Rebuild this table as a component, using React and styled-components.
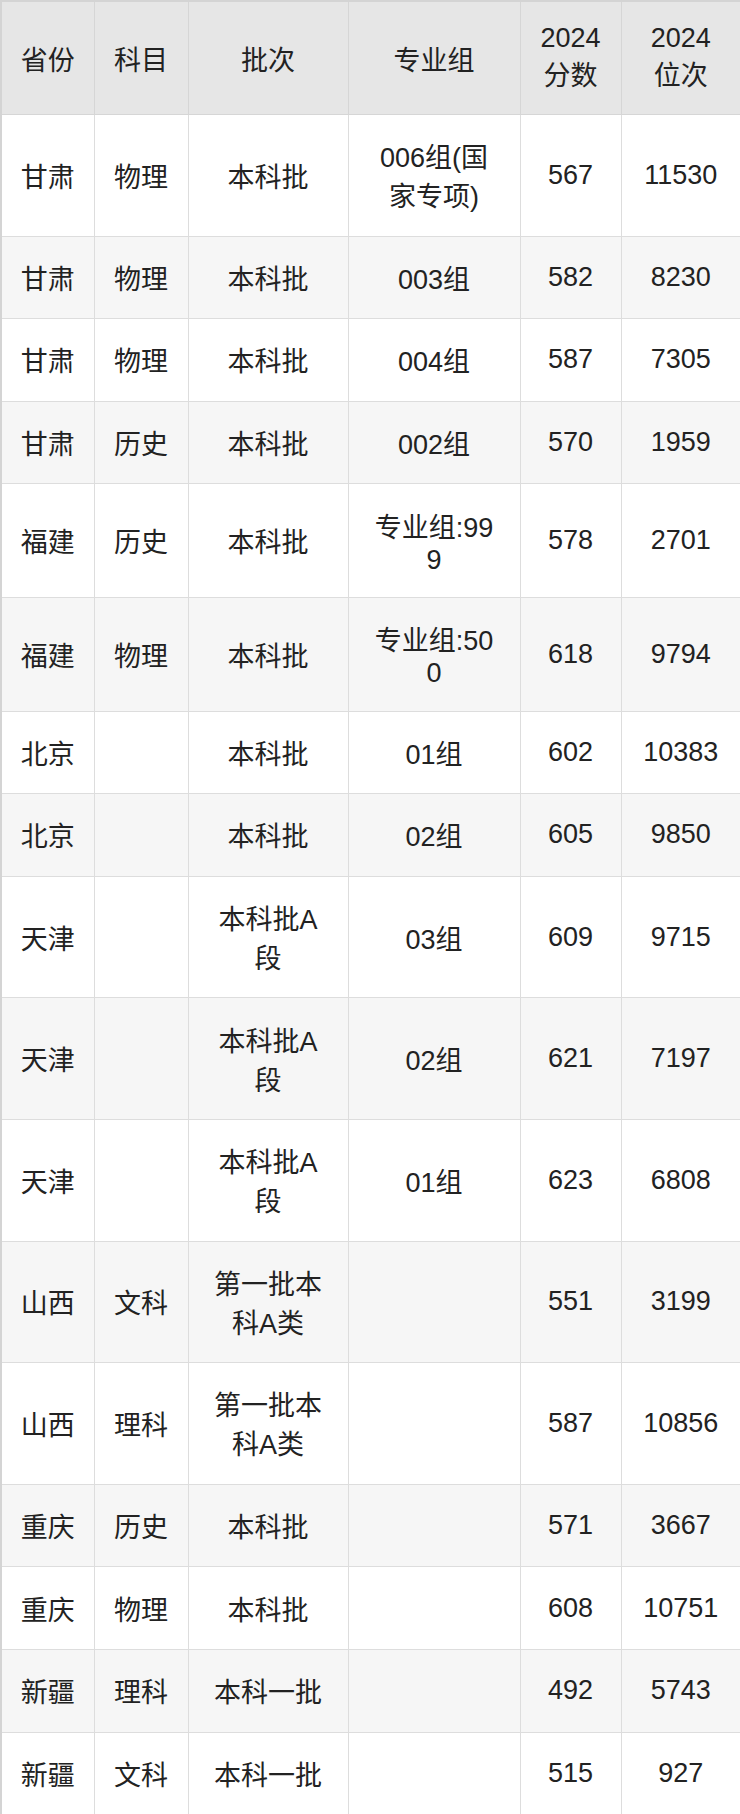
import React from "react";
import styled, { createGlobalStyle } from "styled-components";

const GlobalStyle = createGlobalStyle`
  html, body { margin: 0; padding: 0; background: #ffffff; }
  body { font-family: "Liberation Sans", "Noto Sans CJK SC", sans-serif; }
`;

const Table = styled.table`
  width: 740px;
  table-layout: fixed;
  border-collapse: collapse;
  border: 2px solid #d4d4d4;
  font-family: "Liberation Sans", "Noto Sans CJK SC", sans-serif;
  font-size: 27px;
  line-height: normal;
  color: #222222;
`;

const HeadRow = styled.tr`
  background: #e6e6e6;
`;

const BodyRow = styled.tr`
  background: ${(p) => (p.$striped ? "#f6f6f6" : "#ffffff")};
`;

const HeadCell = styled.th`
  font-weight: normal;
  padding: 21px 12px;
  border: 1px solid #d6d6d6;
  text-align: center;
  vertical-align: middle;
  white-space: pre-line;
`;

const Cell = styled.td`
  padding: 21.3px 12px;
  border: 1px solid #dddddd;
  text-align: center;
  vertical-align: middle;
  white-space: pre-line;
`;

const columns = [
  { key: "p", label: "省份", width: 93 },
  { key: "s", label: "科目", width: 94 },
  { key: "b", label: "批次", width: 160 },
  { key: "g", label: "专业组", width: 172 },
  { key: "f", label: "2024\n分数", width: 101 },
  { key: "r", label: "2024\n位次", width: 120 },
];

const rows = [
  ["甘肃", "物理", "本科批", "006组(国\n家专项)", "567", "11530"],
  ["甘肃", "物理", "本科批", "003组", "582", "8230"],
  ["甘肃", "物理", "本科批", "004组", "587", "7305"],
  ["甘肃", "历史", "本科批", "002组", "570", "1959"],
  ["福建", "历史", "本科批", "专业组:99\n9", "578", "2701"],
  ["福建", "物理", "本科批", "专业组:50\n0", "618", "9794"],
  ["北京", "", "本科批", "01组", "602", "10383"],
  ["北京", "", "本科批", "02组", "605", "9850"],
  ["天津", "", "本科批A\n段", "03组", "609", "9715"],
  ["天津", "", "本科批A\n段", "02组", "621", "7197"],
  ["天津", "", "本科批A\n段", "01组", "623", "6808"],
  ["山西", "文科", "第一批本\n科A类", "", "551", "3199"],
  ["山西", "理科", "第一批本\n科A类", "", "587", "10856"],
  ["重庆", "历史", "本科批", "", "571", "3667"],
  ["重庆", "物理", "本科批", "", "608", "10751"],
  ["新疆", "理科", "本科一批", "", "492", "5743"],
  ["新疆", "文科", "本科一批", "", "515", "927"],
];

export default function App() {
  return (
    <>
      <GlobalStyle />
      <Table>
        <colgroup>
          {columns.map((c) => (
            <col key={c.key} style={{ width: c.width }} />
          ))}
        </colgroup>
        <thead>
          <HeadRow>
            {columns.map((c) => (
              <HeadCell key={c.key}>{c.label}</HeadCell>
            ))}
          </HeadRow>
        </thead>
        <tbody>
          {rows.map((r, i) => (
            <BodyRow key={i} $striped={i % 2 === 1}>
              {r.map((v, j) => (
                <Cell key={j}>{v}</Cell>
              ))}
            </BodyRow>
          ))}
        </tbody>
      </Table>
    </>
  );
}
